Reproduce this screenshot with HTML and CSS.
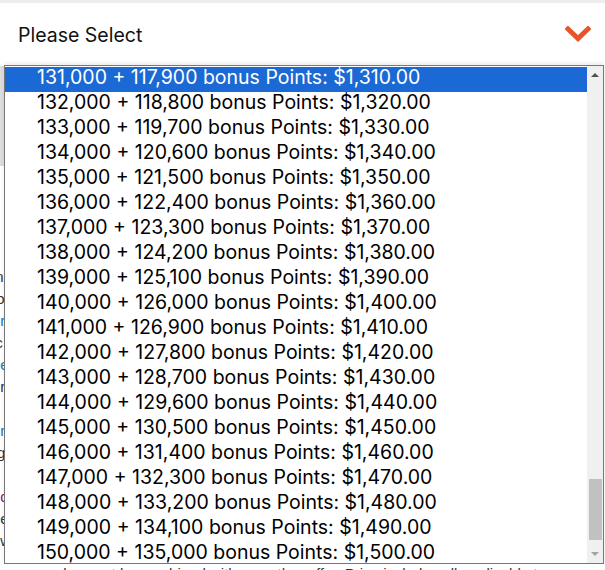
FILE: index.html
```html
<!DOCTYPE html>
<html>
<head>
<meta charset="utf-8">
<link rel="stylesheet" href="styles.css">
</head>
<body>
<div class="page">
  <div class="topstrip"></div>
  <div class="card">
    <div class="select">
      <span class="select-label">Please Select</span>
      <svg class="chev" width="26" height="17" viewBox="0 0 26 17"><polyline points="3,3 13,12.5 23,3" fill="none" stroke="#e8552a" stroke-width="5" stroke-linecap="square"/></svg>
    </div>
  </div>
  <div class="behind">
    <div class="behind-shade"></div>
    <div class="behind-gap"></div>
    <div class="behind-text">
      <span class="frag">in</span>
      <span class="frag">to</span>
      <span class="frag link">or</span>
      <span class="frag">ic</span>
      <span class="frag link">be</span>
      <span class="frag">ur</span>
      <span class="frag">ri</span>
      <span class="frag link">ur</span>
      <span class="frag">rg</span>
      <span class="frag">ri</span>
      <span class="frag visited">nd</span>
      <span class="frag">he</span>
      <span class="frag">ew</span>
    </div>
    <p class="behind-last">ange and cannot be combined with any other offer. Price includes all applicable taxes</p>
  </div>
</div>

<div class="listbox">
  <div class="options">
    <div class="opt sel">131,000 + 117,900 bonus Points: $1,310.00</div>
    <div class="opt">132,000 + 118,800 bonus Points: $1,320.00</div>
    <div class="opt">133,000 + 119,700 bonus Points: $1,330.00</div>
    <div class="opt">134,000 + 120,600 bonus Points: $1,340.00</div>
    <div class="opt">135,000 + 121,500 bonus Points: $1,350.00</div>
    <div class="opt">136,000 + 122,400 bonus Points: $1,360.00</div>
    <div class="opt">137,000 + 123,300 bonus Points: $1,370.00</div>
    <div class="opt">138,000 + 124,200 bonus Points: $1,380.00</div>
    <div class="opt">139,000 + 125,100 bonus Points: $1,390.00</div>
    <div class="opt">140,000 + 126,000 bonus Points: $1,400.00</div>
    <div class="opt">141,000 + 126,900 bonus Points: $1,410.00</div>
    <div class="opt">142,000 + 127,800 bonus Points: $1,420.00</div>
    <div class="opt">143,000 + 128,700 bonus Points: $1,430.00</div>
    <div class="opt">144,000 + 129,600 bonus Points: $1,440.00</div>
    <div class="opt">145,000 + 130,500 bonus Points: $1,450.00</div>
    <div class="opt">146,000 + 131,400 bonus Points: $1,460.00</div>
    <div class="opt">147,000 + 132,300 bonus Points: $1,470.00</div>
    <div class="opt">148,000 + 133,200 bonus Points: $1,480.00</div>
    <div class="opt">149,000 + 134,100 bonus Points: $1,490.00</div>
    <div class="opt">150,000 + 135,000 bonus Points: $1,500.00</div>
  </div>
  <div class="scrollbar">
    <div class="arrow up"></div>
    <div class="track"><div class="thumb"></div></div>
    <div class="arrow down"></div>
  </div>
</div>
</body>
</html>
```
FILE: styles.css
```css
html, body {
  margin: 0;
  padding: 0;
  background: #ffffff;
  width: 605px;
  height: 570px;
  overflow: hidden;
}
.page {
  display: flex;
  flex-direction: column;
  height: 570px;
}
.topstrip {
  height: 3px;
  background: #eeedeb;
}
.card {
  background: #ffffff;
  height: 63px;
}
.select {
  display: flex;
  align-items: center;
  justify-content: space-between;
  height: 63px;
  padding: 0 14px 0 18px;
}
.select-label {
  font-family: "Inter", "Liberation Sans", sans-serif;
  font-size: 19.5px;
  color: #111111;
}
.chev {
  display: block;
}
.behind {
  flex: 1;
  overflow: hidden;
  display: flex;
  flex-direction: column;
}
.behind-shade {
  height: 100px;
  width: 4px;
  background: #dcdcdc;
}
.behind-gap {
  height: 100px;
}
.behind-text {
  display: flex;
  flex-direction: column;
  margin-left: -8px;
  font-family: "Liberation Sans", sans-serif;
  font-size: 15px;
  line-height: 22px;
  color: #333333;
}
.frag.link {
  color: #2a6ebb;
}
.frag.visited {
  color: #8a1a6a;
}
.behind-last {
  margin: auto 0 -2px 0;
  height: 6px;
  overflow: visible;
  white-space: nowrap;
  font-family: "Liberation Sans", sans-serif;
  font-size: 15px;
  line-height: 15px;
  color: #333333;
  padding-left: 4px;
}

.listbox {
  position: absolute;
  left: 4px;
  top: 65px;
  width: 598px;
  height: 497px;
  border: 1px solid #777777;
  background: #ffffff;
  display: flex;
  box-shadow: 0 -2px 4px rgba(0, 0, 0, 0.08);
}
.options {
  flex: 1;
  overflow: hidden;
  padding-top: 1px;
}
.opt {
  height: 25px;
  line-height: 20px;
  padding-left: 32px;
  font-family: "Inter", "Liberation Sans", sans-serif;
  font-size: 19.5px;
  color: #000000;
  white-space: nowrap;
}
.opt.sel {
  background: #1b69d4;
  color: #ffffff;
}
.scrollbar {
  width: 16px;
  background: #f0f0f0;
  display: flex;
  flex-direction: column;
}
.arrow {
  height: 17px;
  position: relative;
}
.arrow::after {
  content: "";
  position: absolute;
  left: 4px;
  width: 0;
  height: 0;
  border-left: 4px solid transparent;
  border-right: 4px solid transparent;
}
.arrow.up::after {
  top: 7px;
  border-bottom: 4px solid #505050;
}
.arrow.down::after {
  top: 6px;
  border-top: 4px solid #a3a3a3;
}
.track {
  flex: 1;
  display: flex;
  flex-direction: column;
  justify-content: flex-end;
  padding: 0 1px 6px 2px;
}
.thumb {
  height: 61px;
  background: #c1c1c1;
}
```
